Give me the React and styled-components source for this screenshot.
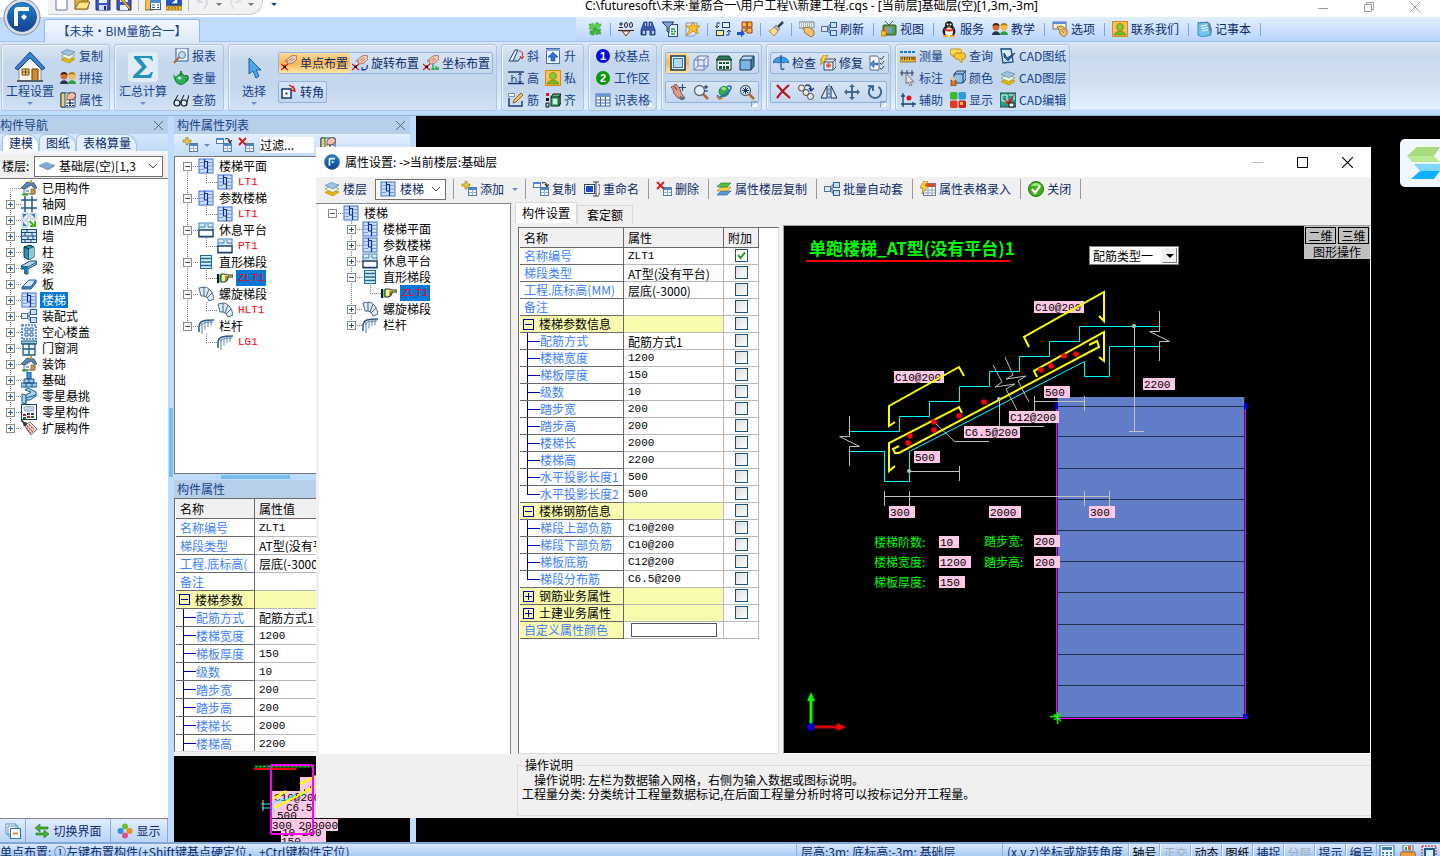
import { useState } from "react";
import styled, { createGlobalStyle } from "styled-components";

const GlobalStyle = createGlobalStyle`
  * {
    box-sizing: border-box;
  }

  body {
    margin: 0;
    overflow: hidden;
    background: #000;
    color: #000;
    font-family: "Noto Sans CJK SC", sans-serif;
    font-size: 12px;
    line-height: 16px;
  }

  button,
  input,
  select {
    margin: 0;
    padding: 0;
    border: 0;
    background: none;
    color: inherit;
    font: inherit;
  }

  svg {
    display: block;
    flex: none;
  }
`;

/* ---------- icons ---------- */

const navy = "#1b3f73";

const stairIcon = (
  <>
    <rect x="1" y="1" width="14" height="14" fill="#cfe0ff" stroke="#3a6fd8" />
    <path d="M1 4.500h5M1 8h5M1 11.500h5M10 4.500h5M10 8h5M10 11.500h5" stroke="#6f9af0" />
    <path d="M6.500 1v9h3v5M6.500 3.500h3v6.500" fill="none" stroke="#0d2f9c" strokeWidth="1.200" />
  </>
);

const layersIcon = (
  <>
    <path d="M1 11.500l6-3 8 2.500-6 4z" fill="#e6b800" stroke="#a98200" strokeWidth=".6" />
    <path d="M1 8l6-3 8 2.500-6 4z" fill="#f4f7e0" stroke="#6f8c4a" strokeWidth=".6" />
    <path d="M1 4.500l6-3 8 2.500-6 4z" fill="#9cc4de" stroke="#4c7b96" strokeWidth=".6" />
  </>
);

const peopleIcon = (
  <>
    <path d="M0 14c0-5 8-5 8 0z" fill="#26364f" />
    <circle cx="4" cy="6" r="3.500" fill="#d0702e" />
    <path d="M.5 5c0-4 7-4 7 0l-3.500-1z" fill="#4b1d0c" />
    <path d="M8 14c0-5 8-5 8 0z" fill="#2da042" />
    <circle cx="12" cy="6" r="3.500" fill="#f2bc4d" />
    <path d="M8.500 5c0-4 7-4 7 0l-3.500-1z" fill="#b07a12" />
  </>
);

const houseIcon = (
  <>
    <path d="M3 8v6h11V7L9 3z" fill="#f3f5ea" stroke="#4b6b7c" />
    <path d="M0 8l6-6 7 1 3 5-3 0-3-3-6 4z" fill="#5a86ad" stroke="#294d70" strokeWidth=".8" />
    <path d="M10 9h3v5h-3z" fill="#e39a2b" stroke="#82510b" strokeWidth=".6" />
    <path d="M5 10h3v2H5z" fill="#7bb3d8" />
    <path d="M1 14.500h6" stroke="#3c9a35" strokeWidth="2" />
    <path d="M9 0h2v3H9z" fill="#d8a01c" />
  </>
);

const linkIcon = (
  <>
    <path d="M6 8h3M8 4v8M8 4h2M8 12h2" stroke="#4d6a90" fill="none" />
    <rect x=".5" y="5.500" width="6" height="5" fill="#dfeaf8" stroke="#52719c" />
    <rect x="9.500" y="1.500" width="6" height="5" fill="#cfe0fa" stroke="#2c5fb8" />
    <rect x="9.500" y="9.500" width="6" height="5" fill="#cfe0fa" stroke="#2c5fb8" />
  </>
);

const sheet = (
  <>
    <rect x="7.500" y="6.500" width="8" height="8" fill="#f4f8fe" stroke="#5a7aa8" />
    <path d="M7 7h9v2H7z" fill="#4f86d0" />
    <path d="M8 11.500h7M11.500 9v5" stroke="#9ab3d4" />
  </>
);

const handCross = (
  <>
    <path d="M4 6l6-5 5-1 1 4-4 4-4 1-2-1 1-2z" fill="#f0c8b4" stroke="#8a5546" strokeWidth=".7" />
    <path d="M8 5l4-2M9 7l4-3" stroke="#b16e58" strokeWidth=".7" />
    <path d="M0 9l7 6M7 9l-7 6" stroke="#e01010" strokeWidth="1.200" />
    <rect x="2.500" y="10.500" width="2.500" height="2.500" fill="#200" />
  </>
);

const greenMan = (
  <>
    <rect x=".5" y=".5" width="15" height="15" fill="#ffc05a" stroke="#d98a14" />
    <circle cx="8" cy="6" r="3.500" fill="#8fc92e" stroke="#4d7d10" strokeWidth=".6" />
    <path d="M2 14c1-5 11-5 12 0z" fill="#7cba22" stroke="#4d7d10" strokeWidth=".6" />
  </>
);

const cubeIcon = (
  <>
    <path d="M1 5l3-4h11l-3 4z" fill="#b5dcf7" />
    <path d="M12 5l3-4v10l-3 4z" fill="#3c83b8" />
    <path d="M1 5h11v10H1z" fill="#79b6e4" />
    <path d="M1 5l3-4h11v10l-3 4H1zM1 5h11v10M12 5l3-4" fill="none" stroke="#18334f" />
  </>
);

const zoomGlass = (
  <>
    <path d="M10 10l5 5" stroke="#b5672a" strokeWidth="2.500" />
    <circle cx="6.500" cy="6.500" r="5" fill="#dff0fb" stroke="#5a6c7b" strokeWidth="1.300" />
  </>
);

const optionHand = (
  <>
    <rect x="1" y="1" width="13" height="7" fill="#fdf3c8" stroke="#4f73ac" />
    <path d="M1 1h13v2H1z" fill="#5b8fd5" />
    <path d="M5 6l5-1 5 4v4l-3 3-4-3-1-4z" fill="#f0c26d" stroke="#8b5a1c" strokeWidth=".8" />
    <path d="M8 8l4 4M10 7l3 3" stroke="#8b5a1c" strokeWidth=".6" />
  </>
);

const ICONS = {
  stair: stairIcon,
  layers: layersIcon,
  people: peopleIcon,
  house: houseIcon,
  link: linkIcon,
  greenMan,
  cube: cubeIcon,
  optionHand,
  newDoc: <path d="M3 0h7l4 4v11H3z" fill="#fff" stroke="#5e7494" />,
  open: (
    <>
      <path d="M1 14V3h5l1 2h7v9z" fill="#e7b53c" stroke="#8b6512" />
      <path d="M1 14l4-7h11l-3 7z" fill="#ffe28a" stroke="#8b6512" />
    </>
  ),
  save: (
    <>
      <path d="M1 1h14v14H1z" fill="#3f53c9" stroke="#182a80" />
      <path d="M4 1h8v7H4z" fill="#eef4ff" />
      <path d="M4 10h8v5H4z" fill="#cfd8e8" />
      <path d="M9 11h2v4H9z" fill="#182a80" />
    </>
  ),
  saveEdit: (
    <>
      <path d="M1 1h14v14H1z" fill="#3f53c9" stroke="#182a80" />
      <path d="M4 1h8v6H4zM4 10h8v5H4z" fill="#eef4ff" />
      <path d="M5 5l8 9 2 1-1-3-7-8z" fill="#f4c542" stroke="#5a3d08" strokeWidth=".8" />
    </>
  ),
  tableBook: (
    <>
      <path d="M0 0h8v15H0z" fill="#f1c25b" stroke="#986a12" />
      <rect x="5.500" y="4.500" width="10" height="10" fill="#fff" stroke="#2d5aa8" />
      <path d="M5 5h11v3H5z" fill="#4f86d0" />
      <path d="M7 10h3M12 10h2M7 12.500h3M12 12.500h2" stroke="#2d5aa8" />
    </>
  ),
  ruler: (
    <>
      <path d="M0 0h16v11H0z" fill="#2458c9" />
      <path d="M4 9l8-7v7z" fill="#dcebff" stroke="#0b2f82" />
      <path d="M0 11h16v4H0z" fill="#f3c13c" stroke="#8a6208" strokeWidth=".8" />
      <path d="M3 12v2M6 12v2M9 12v2M12 12v2" stroke="#6a4804" />
    </>
  ),
  undo: <path d="M3 7c3-5 10-4 9 2l-3 5M3 2v5h5" fill="none" stroke="#d9dde3" strokeWidth="2" />,
  redo: <path d="M13 7c-3-5-10-4-9 2l3 5M13 2v5H8" fill="none" stroke="#dfe2e7" strokeWidth="2" />,
  clover: (
    <g stroke="#2f9322" strokeWidth=".5">
      <path d="M8 8L2 8l1-2-1-3 3 0 1-1zM8 8l0-5 2-2 2 2 2 0-1 3z" fill="#5ccf45" />
      <path d="M8 8l6 0-1 2 1 3-3 0-2 1zM8 8l-1 6-2 0-2-1 0-3z" fill="#43b733" />
    </g>
  ),
  level: (
    <>
      <path d="M1 3h4M3 1v4M1 6.500h4" stroke="#222" />
      <ellipse cx="8" cy="4" rx="1.500" ry="2.500" fill="none" stroke="#222" />
      <ellipse cx="13" cy="4" rx="1.500" ry="2.500" fill="none" stroke="#222" />
      <path d="M0 9.500h16" stroke="#222" />
      <path d="M4 10h8l-4 5z" fill="#f5e6c8" stroke="#6b3a12" />
    </>
  ),
  binoculars: (
    <>
      <path d="M4 1h3v5h2V1h3l3 8v5h-5V9H6v5H1V9z" fill="#3a5bb0" stroke="#1c2e66" strokeWidth=".8" />
      <path d="M3 10h2v3H3zM12 10h2v3h-2zM5 2h1v3H5zM10 2h1v3h-1z" fill="#b7cbff" />
    </>
  ),
  filter: (
    <>
      <rect x="6.500" y="3.500" width="9" height="12" fill="#e9f5ea" stroke="#2a4c84" />
      <path d="M0 1h12L7 6v6l-2-2V6z" fill="#7fa5dc" stroke="#1e3f7c" />
      <path d="M9 8h4M9 10.500h2M12 10.500h2M9 13h4" stroke="#1d9b3a" strokeWidth="1.500" />
    </>
  ),
  star: (
    <>
      <path d="M2 2h11v9l-3 4H2z" fill="#dbe7f8" stroke="#8599bb" />
      <path d="M9 1l2 4 5 0-4 3 2 5-5-3-7 5 4-7-4-3h5z" fill="#ffc629" stroke="#c77f08" strokeWidth=".8" />
    </>
  ),
  swap: (
    <>
      <rect x="7.500" y="1.500" width="7" height="5" fill="#e3eefc" stroke={navy} />
      <rect x="1.500" y="9.500" width="7" height="5" fill="#ffe78c" stroke={navy} />
      <path d="M5 2H2v5M.5 5L2 7l2-2M11 14h3V9M12 11l2-2 2 2" fill="none" stroke={navy} />
    </>
  ),
  blocks: (
    <>
      <path d="M5 1h5v5H5zM10 1h5v5h-5zM10 7h5v5h-5z" fill="#ffb54a" stroke="#9c3c0c" />
      <path d="M5 7h4v3H5z" fill="#ffd690" stroke="#9c3c0c" />
      <path d="M0 11h4V9l4 3.500L4 16v-2H0z" fill="#1d58c9" />
    </>
  ),
  brush: (
    <>
      <path d="M15 1l-5 5" stroke="#39434f" strokeWidth="2.500" />
      <path d="M8 4l4 4-2 2-4-4z" fill="#a8b4c4" stroke="#5b6673" strokeWidth=".6" />
      <path d="M6 6l4 4-4 5-5-5c2 0 3-2 5-4z" fill="#f6dd8b" stroke="#a47b18" strokeWidth=".8" />
    </>
  ),
  handBoard: (
    <>
      <path d="M0 1h15v6H0z" fill="#eceff3" stroke="#6f7f92" />
      <path d="M2 3h11M2 5h11" stroke="#6f7f92" strokeDasharray="1 1" />
      <path d="M4 7l6-1 5 4v4l-3 2-6-4z" fill="#f0c26d" stroke="#8b5a1c" strokeWidth=".8" />
    </>
  ),
  tv: (
    <>
      <path d="M4 0l4 4 4-4" fill="none" stroke="#4a6a31" />
      <rect x="2" y="4" width="13" height="10" rx="1" fill="#5d9a3c" stroke="#2f5d17" />
      <path d="M4 6h7v6H4z" fill="#e8813a" />
      <path d="M7 6h4v6H7z" fill="#4ea8e0" />
      <path d="M0 10h5v5H0z" fill="#f6c12d" stroke="#a26c04" strokeWidth=".7" />
    </>
  ),
  penguin: (
    <>
      <path d="M3 15c-1-4-2-3-1-7 1-2 2-2 2-4 0-5 8-5 8 0 0 2 1 2 2 4 1 4 0 3-1 7z" fill="#1c1c1c" />
      <ellipse cx="8" cy="11" rx="4" ry="4.500" fill="#fff" />
      <path d="M3 7c3 2 7 2 10 0v2c-3 2-7 2-10 0z" fill="#e1251b" />
      <circle cx="6.500" cy="3.500" r="1" fill="#fff" />
      <circle cx="9.500" cy="3.500" r="1" fill="#fff" />
      <path d="M6 5.500h4l-2 1.300zM2 14h5v2H2zM9 14h5v2H9z" fill="#f8a51b" />
    </>
  ),
  notebook: (
    <>
      <path d="M2 2l10-1 3 13-9 2-4-2z" fill="#6ec5ee" stroke="#2b7cae" strokeWidth=".8" />
      <path d="M5 5l6-1M5 7.500l7-1M6 10l6-1" stroke="#fff" />
      <path d="M12 2l3 12 1-5-2-7z" fill="#6d7d8c" />
      <path d="M2 1.500h10" stroke="#49606f" strokeDasharray="1 1" />
    </>
  ),
  property: (
    <>
      <path d="M1 1h14v14H1z" fill="#fff" stroke="#1f4a7c" />
      <path d="M1 1h4v14H1z" fill="#f1d35d" stroke="#1f4a7c" />
      <path d="M6 8h8M6 11h8M6 13.500h8" stroke="#1f4a7c" strokeDasharray="2 1" />
      <path d="M7 3l5-3 4 3-2 4-5 1-2-1z" fill="#efc0ac" stroke="#6a3425" strokeWidth=".8" />
      <path d="M10 8v6M8 11h5" stroke="#123" />
    </>
  ),
  report: (
    <>
      <path d="M3 0h12v13H3z" fill="#eaf4ff" stroke="#2b5c94" />
      <path d="M7 8l-6 7" stroke="#b3672d" strokeWidth="2" />
      <circle cx="9" cy="7" r="3.500" fill="#b9def5" stroke="#5b7d95" />
    </>
  ),
  teapot: (
    <>
      <path d="M12 6c4-2 4 5 0 5" fill="none" stroke="#1b6b33" strokeWidth="1.500" />
      <path d="M3 7L0 4l1 5 3 4z" fill="#2b9c4e" />
      <ellipse cx="8" cy="9.500" rx="5.500" ry="5" fill="#2fae57" stroke="#176e31" strokeWidth=".8" />
      <path d="M5 5h6l-2-2V1H7v2z" fill="#1f8a42" />
      <ellipse cx="6.500" cy="8" rx="2" ry="1.500" fill="#bdf0c9" />
    </>
  ),
  glasses: (
    <>
      <circle cx="4" cy="11" r="3" fill="#dcefff" stroke="#111" strokeWidth="1.200" />
      <circle cx="11" cy="11" r="3" fill="#dcefff" stroke="#111" strokeWidth="1.200" />
      <path d="M1 10l4-7M14 10l2-7M7 10h1M8 9l3-6" fill="none" stroke="#111" />
    </>
  ),
  point: handCross,
  pointRotate: (
    <>
      {handCross}
      <path d="M10 14c4 2 6-1 5-4M10 12v3h3" fill="none" stroke="#1a35c8" strokeWidth="1.200" />
    </>
  ),
  pointCoord: (
    <>
      {handCross}
      <path d="M10 9v6M8 14h8M13 11v4M15 12v3" fill="none" stroke="#12a02e" strokeWidth="1.200" />
    </>
  ),
  corner: (
    <>
      <rect x="1" y="5" width="9" height="9" fill="#fff" stroke="#16375e" strokeWidth="1.500" />
      <rect x="4.500" y="8.500" width="2" height="2" fill="#16375e" />
      <path d="M8 1l2 1 4 3M12 2l2 5-4-1" fill="none" stroke="#e11" strokeWidth="1.300" />
    </>
  ),
  slope: (
    <>
      <path d="M1 13L7 2h3L5 13z" fill="#e3eefc" stroke={navy} />
      <path d="M5 13h5l3-4" fill="none" stroke={navy} />
      <path d="M11 3c4 0 4 3 3 7M12 8l2 3 2-3" fill="none" stroke="#d8261c" />
    </>
  ),
  up: (
    <>
      <rect x="1.500" y=".5" width="13" height="15" fill="#eef5ff" stroke="#4d6f9f" />
      <path d="M1 1h14v2H1z" fill="#7fa6de" />
      <path d="M8 4l5 5h-3v4H6V9H3z" fill="#2e72d9" stroke="#143f8e" strokeWidth=".6" />
    </>
  ),
  height: (
    <>
      <path d="M0 2h16M0 13.500h16" stroke={navy} strokeWidth="1.500" />
      <path d="M12 3v10M10 5l2-2 2 2M10 11l2 2 2-2M4 5v7M4 9c0-2 4-2 4 0v3" fill="none" stroke={navy} />
    </>
  ),
  rebar: (
    <>
      <path d="M1 6v8h13V9" fill="none" stroke={navy} strokeWidth="1.500" />
      <path d="M5 11l1-3 7-7 2 2-7 7z" fill="#f6c551" stroke="#7a4d0a" strokeWidth=".8" />
      <rect x=".5" y="1.500" width="6" height="3" fill="#fff" stroke="#8291a8" />
    </>
  ),
  align: (
    <>
      <path d="M1 1h3v3H1z" fill="#e11" />
      <path d="M1 6h3v3H1z" fill="#111" />
      <path d="M1 11h3v4H1z" fill="#9fd3f4" stroke="#111" />
      <path d="M6 5l2-3h8v9l-2 3H6z" fill="#4bc27b" stroke="#111" />
      <path d="M6 5h8v9M14 5l2-3" fill="none" stroke="#111" />
      <path d="M8 7h4v5H8z" fill="#c9f3d8" />
    </>
  ),
  table: (
    <>
      <rect x="1" y="2" width="14" height="12" fill="#fff" stroke="#3f6aa8" />
      <path d="M1 2h14v3H1z" fill="#6d97d6" />
      <path d="M1 8h14M1 11h14M5.500 5v9M10.500 5v9" stroke="#3f6aa8" />
    </>
  ),
  flatBox: (
    <>
      <rect x="1" y="1" width="14" height="14" fill="#e8f4fb" stroke="#12375c" strokeWidth="1.500" />
      <rect x="3.500" y="3.500" width="9" height="9" fill="#b5dbf3" stroke="#3977a6" />
    </>
  ),
  wireCube: (
    <path
      d="M1 5h10v10H1zM5 1h10v10H5zM1 5l4-4M11 5l4-4M11 15l4-4M1 15l4-4"
      fill="#e8f1fd"
      fillOpacity=".6"
      stroke="#6e7bb8"
    />
  ),
  building: (
    <>
      <path d="M0 5l3-4h10l3 4z" fill="#2d7a58" stroke="#113b2a" />
      <path d="M1 5h14v10H1z" fill="#e9f6ef" stroke="#113b2a" />
      <path d="M3 7h3v2H3zM7 7h2v2H7zM10 7h3v2h-3zM3 11h3v3H3zM7 11h2v4H7zM10 11h3v3h-3z" fill="#14523a" />
    </>
  ),
  pan: (
    <>
      <path d="M1 3l2-1 4 4-3-5 2-1 4 5 1 4 4 5-3 2-5-3-4-5 1-1z" fill="#dd9c8c" stroke="#713a30" strokeWidth=".8" />
      <path d="M10 12l5 2-2 2-4-1z" fill="#5d6e8a" />
      <path d="M12.500 0v7M9 3.500h7" stroke="#2c4e80" strokeWidth="1.200" />
    </>
  ),
  zoom: (
    <>
      {zoomGlass}
      <path d="M11 3h4M13 1v4M11 7h4" stroke="#15233a" />
    </>
  ),
  planet: (
    <>
      <circle cx="8" cy="7.500" r="5" fill="#35a94b" stroke="#166427" strokeWidth=".7" />
      <path d="M5 4c2-2 5-1 5 1s-4 2-5-1z" fill="#9fe87a" />
      <path d="M2 11c-4 7 14-3 13-8-1-2-4 0-4 0" fill="none" stroke="#2469c0" strokeWidth="1.500" />
      <path d="M2 12l1 3 4-1" fill="none" stroke="#d1821f" strokeWidth="1.500" />
    </>
  ),
  zoomFit: (
    <>
      {zoomGlass}
      <path d="M6.500 3v7M3 6.500h7M4 4l5 5M9 4l-5 5" stroke="#12386b" />
    </>
  ),
  umbrella: (
    <>
      <path d="M0 8c1-8 15-8 16 0l-3-1-2 1-3-1-3 1-2-1z" fill="#3c9ee8" stroke="#175a96" strokeWidth=".8" />
      <path d="M8 0v13c0 2 3 2 3 0" fill="none" stroke="#175a96" strokeWidth="1.300" />
    </>
  ),
  repair: (
    <>
      <path d="M4 7l3-3h9v8l-3 3H4z" fill="#dbe9f8" stroke="#324a66" />
      <path d="M4 7h9v8M13 7l3-3" fill="none" stroke="#324a66" />
      <path d="M4 0l4 0-3 4h2L0 10l2-5H0z" fill="#ffd23b" stroke="#a87404" strokeWidth=".7" />
      <path d="M8.500 8v5M6 10.500h5" stroke="#e3502a" strokeWidth="1.800" />
    </>
  ),
  checklist: (
    <>
      <path d="M1 1h7l2 2v12H1z" fill="#fff" stroke="#566d8c" />
      <path d="M9 8H5V5L1 9l4 4v-3h4z" fill="#4a8fd6" stroke="#1e4f8b" strokeWidth=".5" />
      <path d="M11 3l1.500 1.500L15 1M11 8l1.500 1.500L15 6M11 13l1.500 1.500L15 11" fill="none" stroke="#444" />
    </>
  ),
  cross: <path d="M2 1c4 5 8 9 13 13M14 1C9 5 5 10 2 14" fill="none" stroke="#b8141f" strokeWidth="2.200" />,
  circles: (
    <>
      <circle cx="3.500" cy="4" r="3" fill="#eee" stroke="#444" />
      <circle cx="8" cy="8.500" r="3" fill="#eee" stroke="#444" />
      <circle cx="12.500" cy="12.500" r="3" fill="#eee" stroke="#444" />
      <path d="M7 2c3-2 6-1 6 4M11 4l2 3 3-3" fill="none" stroke="#123e80" strokeWidth="1.300" />
    </>
  ),
  mirror: (
    <>
      <path d="M6 2v12H0zM10 2v12h6z" fill="#dfe9f6" stroke="#1a2a44" />
      <path d="M8 0v16" stroke="#1877d6" strokeDasharray="3 1" />
    </>
  ),
  move: (
    <path
      d="M8 0l3 3H9v4h4V5l3 3-3 3V9H9v4h2l-3 3-3-3h2V9H3v2L0 8l3-3v2h4V3H5z"
      fill="#42698f"
    />
  ),
  rotate: <path d="M5 2.500a6.200 6.200 0 1 0 6.500.3M1 2h5v5" fill="none" stroke="#42698f" strokeWidth="2" />,
  measure: (
    <>
      <path d="M0 4h16" stroke="#1479c9" strokeWidth="2" strokeDasharray="3 1" />
      <path d="M0 9h16v5H0z" fill="#e9b530" stroke="#6d4b05" strokeWidth=".6" />
      <path d="M2 9v3M4.500 9v3M7 9v3M9.500 9v3M12 9v3M14 9v3" stroke="#5a3d04" />
    </>
  ),
  mark: (
    <>
      <path d="M0 3h14M2 0v6M7 0v6M12 0v6" stroke="#2b3950" />
      <path d="M6 3l8 9h-4l2 3-2 1-2-4-2 2z" fill="#ddd" stroke="#777" />
    </>
  ),
  aux: (
    <>
      <path d="M3 1v14M1 12h15M1 4h4M13 10v5" stroke={navy} strokeWidth="1.300" />
      <circle cx="9" cy="6" r="2.500" fill="#e01010" />
    </>
  ),
  chat: (
    <>
      <path d="M1 1h9c2 0 2 6 0 6H5L3 9V7H1C0 7 0 1 1 1z" fill="#ffd84f" stroke="#ad7c08" strokeWidth=".8" />
      <path d="M6 5h8c2 0 2 6 0 6h-2v4l-4-4H6c-2 0-2-6 0-6z" fill="#ffc62b" stroke="#ad7c08" strokeWidth=".8" />
    </>
  ),
  colorCube: (
    <>
      <path d="M4 4l3-3h9v8l-3 4H4z" fill="#8fc4ec" stroke="#1f3c5c" />
      <path d="M4 4h9v9M13 4l3-3" fill="none" stroke="#1f3c5c" />
      <path d="M1 10h5v6H1z" fill="#c9773a" stroke="#6b3610" strokeWidth=".7" />
      <circle cx="3.500" cy="9" r="2" fill="#e8c39b" />
    </>
  ),
  tiles: (
    <>
      <rect x="0" y="0" width="7.500" height="7.500" rx="1.500" fill="#3dbb2d" />
      <rect x="8.500" y="0" width="7.500" height="7.500" rx="1.500" fill="#2b9be0" />
      <rect x="0" y="8.500" width="7.500" height="7.500" rx="1.500" fill="#e23b1e" />
      <rect x="8.500" y="8.500" width="7.500" height="7.500" rx="1.500" fill="#d92020" />
      <rect x="10" y="10" width="3" height="3" fill="#f7c32f" />
    </>
  ),
  cadPaper: (
    <>
      <path d="M1 1h10l2 13-10 1z" fill="#d8ecff" stroke="#154b86" strokeWidth="1.300" />
      <path d="M4 5l3 5 8-5-7 8-4-4z" fill="#2173c9" stroke="#113" strokeWidth=".7" />
    </>
  ),
  cadEdit: (
    <>
      <path d="M0 1h16v14H0z" fill="#2b9c87" stroke="#0f5244" />
      <path d="M2 3h5v6H2zM9 3h5v5" fill="none" stroke="#d8fff5" />
      <path d="M4 6l4 4 7-9-5 11H7z" fill="#e11" />
      <path d="M9 11h5v4H9z" fill="#fff" stroke="#111" />
    </>
  ),
  addSheet: (
    <>
      {sheet}
      <path d="M4 0h2v3h3v2H6v3H4V5H1V3h3z" fill="#f2d43e" stroke="#8c7108" strokeWidth=".6" />
    </>
  ),
  copySheet: (
    <>
      <rect x=".5" y="1.500" width="7" height="5" fill="#f4f8fe" stroke="#5a7aa8" />
      <path d="M0 1h8v2H0z" fill="#4f86d0" />
      {sheet}
      <path d="M9 2c3-1 5 0 5 3M12 3l2 3 2-3" fill="none" stroke="#111" />
    </>
  ),
  delSheet: (
    <>
      {sheet}
      <path d="M1 1l7 7M8 1L1 8" stroke="#d11a1a" strokeWidth="1.800" />
    </>
  ),
  rename: (
    <>
      <rect x=".5" y="3.500" width="10" height="9" fill="#fff" stroke="#2b4a7a" />
      <path d="M2 5h7v6H2z" fill="#1c49c9" />
      <path d="M9 1h6M9 15h6M12 1v14M14 4h2v9h-2" fill="none" stroke="#444" />
    </>
  ),
  greenLayers: (
    <>
      <path d="M1 14l4-4h10l-4 4z" fill="#4f9de0" stroke="#22598f" strokeWidth=".6" />
      <path d="M1 10l4-4h10l-4 4z" fill="#ffd257" stroke="#a77c0c" strokeWidth=".6" />
      <path d="M1 6l4-4h10l-4 4z" fill="#59bd4d" stroke="#257a1e" strokeWidth=".6" />
    </>
  ),
  sheetFlash: (
    <>
      <rect x="3.500" y="2.500" width="12" height="12" fill="#fff" stroke="#6b7c94" />
      <path d="M4 3h11v3H4z" fill="#d9482e" />
      <path d="M4 9h11M4 12h11M8 6v8M12 6v8" stroke="#8ba0bd" />
      <path d="M4 0h4L5 5h3l-6 8 1-6H0z" fill="#ffd23b" stroke="#a87404" strokeWidth=".7" />
    </>
  ),
  ok: (
    <>
      <circle cx="8" cy="8" r="7.500" fill="#3fae1c" stroke="#2a7b10" />
      <path d="M3 5c2-4 8-4 10 0z" fill="#a6e57f" />
      <path d="M4 8l3 4 5-7" fill="none" stroke="#fff" strokeWidth="2.200" />
    </>
  ),
  axisNet: <path d="M4 0v16M11 0v16M0 4h16M0 12h16" stroke="#1d5a8e" strokeWidth="1.500" />,
  bim: (
    <>
      <path d="M1 1h6v6H1zM9 1h6v6H9zM1 9h6v6H1z" fill="#eaf2fb" stroke="#a9c1de" />
      <path d="M2 2l4 0-4 4zM14 2v4l-4-4zM2 14v-4l4 4z" fill="#3e78b8" />
      <path d="M9 8l4 4V9h2v6H9v-2h2L8 10z" fill="#46b21f" />
    </>
  ),
  wall: (
    <>
      <rect x=".5" y="1.500" width="15" height="13" fill="#cfe3f3" stroke="#174a78" />
      <path d="M0 4.500h16M0 8h16M0 11.500h16M6 1v4M11 4v4M4 4v4M7 8v4M12 8v4M4 11v4M10 11v4" stroke="#174a78" />
    </>
  ),
  column: (
    <>
      <path d="M3 3l6-2 4 2v10l-5 3-5-3z" fill="#2f91a8" stroke="#0b2e44" />
      <path d="M3 3l5 2v11M8 5l5-2" fill="none" stroke="#0b2e44" />
      <path d="M8 5l5-2v10l-5 3z" fill="#7fd0dc" />
    </>
  ),
  beam: (
    <>
      <path d="M0 6l9-5h7v3l-9 5v5H4V9H0z" fill="#b4d4ea" stroke="#134a77" />
      <path d="M0 6h7v3H0zM3 9h3v5H3z" fill="#2272a8" />
      <path d="M7 7l9-5" stroke="#134a77" />
    </>
  ),
  slab: (
    <>
      <path d="M1 11l7-7h7l-5 7z" fill="#cce6f7" stroke="#1d5a8e" />
      <path d="M1 11v2h9l5-6V4l-5 7z" fill="#5b9cc9" stroke="#1d5a8e" />
    </>
  ),
  hollow: (
    <>
      <rect x="1" y="1" width="14" height="14" fill="#e2edfb" stroke="#3a74c4" strokeWidth="1.500" strokeDasharray="2 1" />
      <path d="M4 4h3v3H4zM9 4h3v3H9zM4 9h3v3H4zM9 9h3v3H9z" fill="#fff" stroke="#2a5cae" />
    </>
  ),
  windowDoor: (
    <>
      <path d="M0 1h16v3H0z" fill="#9fc7de" stroke="#1b5a84" />
      <path d="M2 4h12v11H2zM8 4v11M2 9h12" fill="#eaf4fb" stroke="#1b5a84" strokeWidth="1.300" />
    </>
  ),
  foundation: (
    <>
      <path d="M6 0h4v7H6z" fill="#3c96e3" stroke="#0f4f8d" />
      <path d="M3 7h10v4H3zM0 11h16v4H0z" fill="#9ccbea" stroke="#0f4f8d" />
      <path d="M8 7v4M5 11v4M11 11v4" stroke="#0f4f8d" />
    </>
  ),
  overhang: (
    <>
      <path d="M1 6l4 1 5-3-6-2 3-2 8 4v4l-6 4-4 0v4l-4-1z" fill="#a8d2ea" stroke="#195d88" />
      <path d="M5 7v8M5 10l10-3" fill="none" stroke="#195d88" />
    </>
  ),
  misc: (
    <>
      <rect x=".5" y=".5" width="15" height="15" fill="#fff" stroke="#1d3f66" />
      <path d="M4 7c-3-3 1-6 4-4 3-2 7 1 4 4z" fill="#c5d6e6" stroke="#6f8ca5" strokeWidth=".7" />
      <path d="M2 10h3v2H2zM6 12h3v2H6z" fill="#d11" />
      <path d="M6 9h3v2H6zM10 9h3v2h-3z" fill="#283c9a" />
      <path d="M2 13h3v2H2zM10 12h3v2h-3z" fill="#176b2c" />
    </>
  ),
  extend: (
    <>
      <path d="M3 5l6-3 7 7-6 6z" fill="#f6e6df" stroke="#6d6d6d" />
      <path d="M6 6l6 6M8 4.500l5 5M5 8l5 5" stroke="#c23030" strokeWidth="1.200" strokeDasharray="2 1" />
      <path d="M0 0l5 5" stroke="#222" strokeWidth="1.500" />
      <circle cx="4" cy="4" r="2" fill="#333" />
    </>
  ),
  platform: (
    <>
      <rect x="1" y="1" width="14" height="14" fill="#d7ebf9" stroke="#4583b9" />
      <path d="M1 5h6V2M10 2v3h5" fill="none" stroke="#4583b9" />
      <path d="M1 8h14v6.500H1z" fill="#fff" stroke="#1d4266" strokeWidth="1.300" />
    </>
  ),
  straight: (
    <>
      <rect x="2.500" y="1.500" width="11" height="13" fill="#d9f0f7" stroke="#1c6b9c" />
      <path d="M2 4.500h12M2 8h12M2 11.500h12" stroke="#1c6b9c" strokeWidth="1.300" />
    </>
  ),
  spiral: (
    <>
      <path d="M1 2l6-1c5 1 8 6 9 12l-5 2c-1-3-3-5-6-5l-2 0z" fill="#dfe9f2" stroke="#4a6984" />
      <path d="M6 1l0 9M11 3l-3 8M14 7l-5 5" stroke="#4a6984" />
    </>
  ),
  rail: (
    <>
      <path d="M1 14V9c0-6 4-7 15-7" fill="none" stroke="#2d5987" strokeWidth="1.500" />
      <path d="M4 5v11M7 3.500v8M10 3v6M13 2v6M3 8c1-3 4-4 12-4" fill="none" stroke="#5c84ab" />
    </>
  ),
  pointer: (
    <>
      <path d="M0 4h2v9H0z" fill="#111" />
      <path d="M2 4.500h2v8H2z" fill="#2cd0d8" />
      <path d="M4 4l4 0 2 1h6v2h-5v2h-1v2H8v1H4z" fill="#fff27a" stroke="#111" strokeWidth=".9" />
      <path d="M8 7h3M8 9h2" stroke="#111" strokeWidth=".8" />
    </>
  ),
  flatSlab: (
    <>
      <path d="M0 7l7-3 9 3-7 4z" fill="#7fa8d0" />
      <path d="M0 7l9 4 7-4v1l-7 4-9-4z" fill="#50789f" />
    </>
  ),
  windows: (
    <>
      <path d="M1 1h10v10H1zM3 3h10v10H3z" fill="#fff" stroke="#5b93b8" />
      <rect x="5.500" y="5.500" width="10" height="10" fill="#f2f9ff" stroke="#3a7299" />
      <path d="M8 10.500h5" stroke="#e28a1f" strokeWidth="1.800" />
    </>
  ),
  exchange: (
    <>
      <path d="M6 1L1 5l5 4V6h8V4H6z" fill="#43b32b" stroke="#1f7411" strokeWidth=".6" />
      <path d="M10 7l5 4-5 4v-3H2v-2h8z" fill="#43b32b" stroke="#1f7411" strokeWidth=".6" />
    </>
  ),
  flower: (
    <>
      <circle cx="8" cy="3.500" r="3" fill="#6cc02f" />
      <circle cx="12.500" cy="8" r="3" fill="#f08a24" />
      <circle cx="8" cy="12.500" r="3" fill="#e24b86" />
      <circle cx="3.500" cy="8" r="3" fill="#3a8ddb" />
    </>
  ),
  calc: (
    <>
      <rect x="1" y="0" width="14" height="16" fill="#e6f3fb" stroke="#2f6c8e" />
      <path d="M3 2h10v3H3z" fill="#3d82a5" />
      <path d="M3 8h10M3 11h10M3 14h10" stroke="#3d82a5" strokeWidth="2" strokeDasharray="2 2" />
    </>
  ),
  printer: (
    <>
      <path d="M3 0h10v6H3z" fill="#e9f0f7" stroke="#5b7691" />
      <path d="M5 2h2v3H5z" fill="#2f9d48" />
      <path d="M8 1h3v4H8z" fill="#e0622a" />
      <path d="M1 7h14l1 8H0z" fill="#ef9e42" stroke="#8b4e0c" strokeWidth=".7" />
    </>
  ),
  frame: (
    <>
      <rect x="1" y="1" width="14" height="14" fill="none" stroke="#d11" strokeDasharray="2 1" />
      <rect x="4" y="4" width="9" height="12" fill="#d8ecfb" stroke="#1d5b92" strokeWidth="2" />
    </>
  ),
};

const Icon = ({ name, size = 16 }) => (
  <svg width={size} height={size} viewBox="0 0 16 16" aria-hidden="true">
    {ICONS[name]}
  </svg>
);

const Logo = ({ size }) => (
  <svg width={size} height={size} viewBox="0 0 38 38" aria-hidden="true">
    <defs>
      <linearGradient id="ball" x1="0" y1="0" x2="0" y2="1">
        <stop offset="0" stopColor="#1d86cf" />
        <stop offset="1" stopColor="#123f8e" />
      </linearGradient>
    </defs>
    <circle cx="19" cy="19" r="18" fill={size > 20 ? "#d9dde4" : "#1a5aa8"} stroke="#858c98" />
    <circle cx="19" cy="19" r={size > 20 ? 14.5 : 17} fill="url(#ball)" stroke="#2a5b98" />
    <path d="M13 28V13q0-2 2-2h11" fill="none" stroke="#fff" strokeWidth="4" />
    <path d="M21 16l3 3-3 3-3-3z" fill="#fff" />
  </svg>
);

const BigHouse = () => (
  <svg width="32" height="32" viewBox="0 0 32 32" aria-hidden="true">
    <path d="M5 15v15h22V15L16 5z" fill="#fbf7ea" stroke="#8b8f94" />
    <path d="M1 17L16 1l15 16-3 2L16 7 4 19z" fill="#3b7fd0" stroke="#174a8c" />
    <path d="M18 18h6v12h-6z" fill="#d8892b" stroke="#6d3c0a" />
    <path d="M8 18h7v6H8z" fill="#f6c962" stroke="#6d4d18" />
    <path d="M11.500 18v6M8 21h7" stroke="#6d4d18" />
    <path d="M3 30h26" stroke="#55606a" strokeWidth="2" />
  </svg>
);

const BigSigma = () => (
  <svg width="32" height="32" viewBox="0 0 32 32" aria-hidden="true">
    <rect x="1" y="1" width="30" height="30" rx="4" fill="#e0edf7" />
    <path d="M25 5H7v2l8 9-9 9v2h18l2-6h-2c-1 2-2 3-4 3h-8l8-8-7-9h7c3 0 4 1 5 3h1z" fill="#2391bd" />
  </svg>
);

const BigArrow = () => (
  <svg width="32" height="32" viewBox="0 0 32 32" aria-hidden="true">
    <path d="M11 7v16l4-3 3 7 3-2-3-6h5z" fill="#4ea6ea" stroke="#215f9c" />
  </svg>
);

const Ball = ({ n, fill }) => (
  <svg width="16" height="16" viewBox="0 0 16 16" aria-hidden="true">
    <circle cx="8" cy="8" r="7" fill={fill} />
    <text x="8" y="12" fontSize="11" fontWeight="700" fontFamily="Liberation Sans, sans-serif" fill="#fff" textAnchor="middle">
      {n}
    </text>
  </svg>
);

const Chevron = () => (
  <svg width="10" height="6" viewBox="0 0 10 6" aria-hidden="true">
    <path d="M1 1l4 4 4-4" fill="none" stroke="#444" />
  </svg>
);

const Close = ({ size = 9, color = "#3c5a86" }) => (
  <svg width={size} height={size} viewBox="0 0 10 10" aria-hidden="true">
    <path d="M0 0l10 10M10 0L0 10" stroke={color} />
  </svg>
);

/* ---------- shell ---------- */

const Page = styled.div`
  position: relative;
  display: flex;
  flex-direction: column;
  height: 100vh;
  overflow: hidden;
`;

const TitleBar = styled.header`
  display: flex;
  flex: none;
  align-items: flex-start;
  height: 17px;
  overflow: hidden;
  background: #fff;
`;

const QuickBar = styled.div`
  display: flex;
  flex: none;
  align-items: flex-end;
  gap: 5px;
  width: 215px;
  height: 15px;
  margin-left: 48px;
  padding: 0 0 3px 5px;
  border-bottom: 1px solid #c8ccd2;
  border-right: 1px solid #c8ccd2;
  border-radius: 0 0 14px 0;
  background: #f2f2f3;
  overflow: hidden;
`;

const TitleText = styled.h1`
  flex: 1;
  margin: 0;
  padding-left: 28px;
  font-family: "Noto Sans", "Noto Sans CJK SC", sans-serif;
  font-size: 12px;
  font-weight: 400;
  line-height: 12px;
  text-align: center;
  white-space: nowrap;
`;

const WindowButtons = styled.div`
  display: flex;
  align-items: center;
  gap: ${(p) => p.$gap || 36}px;
  padding-right: ${(p) => p.$right || 20}px;
  height: ${(p) => p.$height || 13}px;
`;

const PlainButton = styled.button`
  display: flex;
  align-items: center;
  justify-content: center;
`;

const TabRow = styled.div`
  display: flex;
  flex: none;
  justify-content: space-between;
  height: 25px;
  background: #bfdbff;
  border-bottom: 1px solid #9fc3ec;
`;

const MainTab = styled.button`
  width: 156px;
  height: 23px;
  margin: 2px 0 0 44px;
  border: 1px solid #93baf0;
  border-bottom: 0;
  border-radius: 3px 3px 0 0;
  background: linear-gradient(#f3f8ff, #dce9f9);
  color: #15428b;
`;

const MenuBar = styled.nav`
  display: flex;
  align-items: center;
  gap: 6px;
  width: 60%;
  padding-left: 11px;
  background: linear-gradient(#e3efff, #cfe2ff 50%, #b7d4fb);
`;

const Divider = styled.span`
  flex: none;
  width: 1px;
  height: ${(p) => p.$height || 13}px;
  margin: 0 1px;
  background: ${(p) => p.$color || "#7da8de"};
`;

const MenuButton = styled.button`
  display: flex;
  flex: none;
  align-items: center;
  gap: 3px;
  padding-right: ${(p) => p.$end || 0}px;
  color: #0c2b6b;
  white-space: nowrap;
`;

const LogoSpot = styled.div`
  position: absolute;
  top: -2px;
  left: 3px;
`;

const Ribbon = styled.div`
  display: flex;
  flex: none;
  gap: 4px;
  height: 74px;
  padding: 2px 1px 4px;
  border-bottom: 1px solid #8fb4e3;
  background: linear-gradient(#dbe6f4, #c9d9ed 20%, #d3e1f2 60%, #e3f1ff 92%, #bfdbff 93%);
`;

const Group = styled.section`
  position: relative;
  display: flex;
  flex: none;
  align-items: center;
  width: ${(p) => p.$width}px;
  padding-left: ${(p) => p.$pad || 4}px;
  border: 1px solid #a9c4e4;
  border-radius: 3px;
  box-shadow: inset 1px 1px 0 #edf4fc;
  background: linear-gradient(#d9e5f3, #c6d8ed 25%, #c3d6ed 65%, #d2e2f5);
  color: #15428b;
`;

const Launcher = styled.button`
  position: absolute;
  right: 4px;
  bottom: 3px;
  width: 6px;
  height: 6px;
  border-top: 1px solid #7f9fc8;
  border-left: 1px solid #7f9fc8;
  background: linear-gradient(135deg, transparent 50%, #fff 50%);
`;

const BigButton = styled.button`
  display: flex;
  flex: none;
  flex-direction: column;
  align-items: center;
  width: 48px;
  white-space: nowrap;
`;

const Caret = styled.span`
  flex: none;
  width: 0;
  height: 0;
  margin: ${(p) => p.$margin || "0"};
  border: 3px solid transparent;
  border-top-color: ${(p) => p.$color || "#6b8fc0"};
  border-bottom: 0;
`;

const SmallGrid = styled.div`
  display: grid;
  grid-template-rows: repeat(3, 22px);
  grid-auto-flow: column;
  column-gap: ${(p) => p.$gap || 7}px;
  margin-left: ${(p) => p.$left || 0}px;
`;

const SmallButton = styled.button`
  display: flex;
  align-items: center;
  gap: 3px;
  white-space: nowrap;
`;

const Strips = styled.div`
  display: flex;
  flex-direction: column;
  align-items: flex-start;
  gap: 7px;
`;

const Strip = styled.div`
  display: flex;
  border: 1px solid #94b3da;
  border-radius: 2px;
  background: linear-gradient(#d7e4f4, #c4d7ee);
`;

const StripButton = styled.button`
  display: flex;
  align-items: center;
  justify-content: center;
  gap: 3px;
  height: 20px;
  padding: 0 2px;
  min-width: 23px;
  background: ${(p) => (p.$on ? "linear-gradient(#fbdb9c, #fdb755 50%, #ffe6a0)" : "none")};
  color: #0c2b6b;
  white-space: nowrap;
`;

const Work = styled.main`
  position: relative;
  display: flex;
  flex: 1;
  min-height: 0;
  background: #000;
`;

/* ---------- docked panels ---------- */

const Dock = styled.aside`
  display: flex;
  flex: none;
  flex-direction: column;
  width: ${(p) => p.$width}px;
  background: #fff;
  overflow: hidden;
`;

const Sash = styled.div`
  flex: none;
  width: 6px;
  background: ${(p) =>
    p.$mark ? "linear-gradient(#79bdf0, #79bdf0) 1px 292px / 4px 69px no-repeat, #bfdbff" : "#bfdbff"};
`;

const DockTitle = styled.div`
  display: flex;
  flex: none;
  align-items: center;
  justify-content: space-between;
  height: 18px;
  padding: 0 5px 0 ${(p) => p.$pad || 0}px;
  background: #b8cfe9;
  color: #15428b;
`;

const DockTabs = styled.div`
  display: flex;
  flex: none;
  height: 17px;
  padding-left: 2px;
  background: linear-gradient(#d3e5fb, #c0dafb);
`;

const DockTab = styled.button`
  padding: 0 5px 0 6px;
  border: 1px solid #a5c3ea;
  border-bottom: 0;
  border-radius: 6px 12px 0 0;
  background: ${(p) => (p.$on ? "#fff" : "#e3effd")};
  color: #0c2b6b;
`;

const FloorRow = styled.label`
  display: flex;
  flex: none;
  align-items: center;
  justify-content: space-between;
  height: 28px;
  padding: 0 5px 0 2px;
  border-top: 3px solid #f3f7fd;
  border-bottom: 1px solid #777;
  background: #f0f0f0;
`;

const Combo = styled.span`
  display: flex;
  flex: none;
  align-items: center;
  gap: 4px;
  width: ${(p) => p.$width}px;
  height: 21px;
  padding: 0 4px;
  border: 1px solid #6f6f6f;
  background: #fff;
`;

const Select = styled.select`
  flex: 1;
  min-width: 0;
  appearance: none;
  outline: 0;
  white-space: nowrap;
`;

const Tree = styled.ul`
  flex: ${(p) => p.$flex || "1"};
  min-height: 0;
  margin: 0;
  padding: ${(p) => p.$pad || "1px 0 0 6px"};
  border: solid #777;
  border-width: ${(p) => (p.$boxed ? "1px 0 1px 1px" : "0")};
  overflow: hidden;
  list-style: none;
  background: #fff;
`;

const TreeRow = styled.li`
  display: flex;
  align-items: center;
  height: 16px;
  white-space: nowrap;
`;

const dots = "linear-gradient(#808080 50%, transparent 0)";
const dotsX = "linear-gradient(90deg, #808080 50%, transparent 0)";

const clips = {
  first: "polygon(4px 8px, 100% 8px, 100% 9px, 5px 9px, 5px 16px, 4px 16px)",
  top: "polygon(0 3px, 100% 3px, 100% 100%, 0 100%)",
  root: "polygon(0 3px, 100% 3px, 100% 13px, 0 13px)",
  last: "polygon(0 0, 100% 0, 100% 13px, 0 13px)",
  leaf: "polygon(4px 0, 100% 0, 100% 9px, 4px 9px)",
};

const Guide = styled.span`
  flex: none;
  width: 19px;
  height: 16px;
  background: ${(p) => (p.$line ? `${dots} 4px 0 / 1px 2px repeat-y` : "none")};
`;

const Branch = styled.span`
  display: flex;
  flex: none;
  align-items: center;
  width: 15px;
  height: 16px;
  background-image: ${dots}, ${dotsX};
  background-size: 1px 2px, 2px 1px;
  background-repeat: repeat-y, repeat-x;
  background-position: 4px 0, 4px 8px;
  clip-path: ${(p) => clips[p.$end] || "none"};
`;

const Toggle = styled.button`
  width: 9px;
  height: 9px;
  border: 1px solid #8c8c8c;
  background:
    linear-gradient(#2d4f9c, #2d4f9c) 1px 3px / 5px 1px no-repeat,
    linear-gradient(#2d4f9c, #2d4f9c) 3px 1px / 1px ${(p) => (p.$open ? 0 : 5)}px no-repeat,
    #fff;
`;

const TreeText = styled.span`
  margin-left: 3px;
  padding: 0 2px;
  height: 16px;
  line-height: 16px;
  font-family: ${(p) => (p.$code ? `"Liberation Mono", monospace` : "inherit")};
  font-size: ${(p) => (p.$code ? 11 : 12)}px;
  color: ${(p) => (p.$code ? "#f00" : p.$on ? "#fff" : "#000")};
  background: ${(p) => (p.$on ? "#0078d7" : "none")};
`;

const DockFooter = styled.div`
  display: flex;
  flex: none;
  height: 24px;
  border-top: 1px solid #888;
  background: linear-gradient(#e0ecfd, #b9d4f9);
`;

const FooterButton = styled.button`
  display: flex;
  flex: ${(p) => (p.$small ? "0 0 26px" : p.$grow || 1)};
  align-items: center;
  justify-content: center;
  gap: 3px;
  border-right: 1px solid #8aa9d4;
  color: #0c2b6b;
  white-space: nowrap;
`;

const PanelBar = styled.div`
  display: flex;
  flex: none;
  align-items: center;
  gap: 6px;
  height: 22px;
  padding-left: 8px;
  background: linear-gradient(#e3efff, #c5dcfb);
`;

const FilterInput = styled.input`
  width: 54px;
  height: 16px;
  background: #fff;
`;

const Splitter = styled.div`
  flex: none;
  height: 6px;
  background: linear-gradient(90deg, #79bdf0, #79bdf0) 47px 1px / 69px 4px no-repeat, #bfdbff;
`;

/* ---------- property grids ---------- */

const GridBox = styled.div`
  flex: ${(p) => p.$flex || "1"};
  min-height: 0;
  border: 1px solid #6d6d6d;
  border-right-color: #ddd;
  border-bottom-color: #ddd;
  background: #fff;
  overflow: hidden;
`;

const Grid = styled.table`
  width: ${(p) => p.$width}px;
  margin-left: 1px;
  border-collapse: separate;
  border-spacing: 0;
  table-layout: fixed;
`;

const HeadCell = styled.th`
  height: 20px;
  padding: 0 0 0 4px;
  border-right: 1px solid #696969;
  border-bottom: 1px solid #696969;
  background: #f0f0f0;
  font-weight: 400;
  line-height: 16px;
  text-align: left;
`;

const NameCell = styled.th`
  height: ${(p) => p.$height}px;
  padding: 0 0 0 ${(p) => (p.$kind === "row" || p.$kind === "color" ? 4 : 2)}px;
  border-right: 1px solid #696969;
  border-bottom: 1px solid #696969;
  background: ${(p) => (p.$kind === "head" || p.$kind === "color" ? "#f8fbae" : "#fff")};
  color: ${(p) => (p.$kind === "head" ? "#000" : "#4080ff")};
  font-weight: 400;
  line-height: ${(p) => p.$height - 1}px;
  text-align: left;
  white-space: nowrap;
  overflow: hidden;
`;

const NameInner = styled.div`
  display: flex;
  align-items: center;
  gap: ${(p) => p.$gap || 0}px;
  height: ${(p) => p.$height - 1}px;
`;

const ValueCell = styled.td`
  padding: ${(p) => (p.$code ? 1 : 0)}px 0 0 4px;
  border-right: 1px solid #b9b9b9;
  border-bottom: 1px solid #b9b9b9;
  background: ${(p) => (p.$fill ? "#f8fbae" : "#fff")};
  font-family: ${(p) => (p.$code ? `"Liberation Mono", monospace` : "inherit")};
  font-size: ${(p) => (p.$code ? 11 : 12)}px;
  line-height: 15px;
  white-space: nowrap;
  overflow: hidden;
`;

const CheckCell = styled.td`
  padding: 0;
  border-right: 1px solid #b9b9b9;
  border-bottom: 1px solid #b9b9b9;
`;

const Check = styled.input`
  display: block;
  appearance: none;
  width: 13px;
  height: 13px;
  margin: 0 auto 1px;
  border: 1px solid #1c5180;
  background: linear-gradient(135deg, #dcdcd7, #fff) padding-box;

  &:checked {
    background: url("data:image/svg+xml,%3Csvg xmlns='http://www.w3.org/2000/svg' viewBox='0 0 11 11'%3E%3Cpath d='M2 5l2.500 3L9 2.500' fill='none' stroke='%2321a121' stroke-width='2'/%3E%3C/svg%3E")
      #fff;
  }
`;

const GroupToggle = styled.button`
  flex: none;
  width: 11px;
  height: 11px;
  margin-left: 1px;
  border: 1px solid #0000a0;
  background:
    linear-gradient(#0000a0, #0000a0) 1px 4px / 7px 1px no-repeat,
    linear-gradient(#0000a0, #0000a0) 4px 1px / 1px ${(p) => (p.$open ? 0 : 7)}px no-repeat;
`;

const Stem = styled.span`
  flex: none;
  width: 13px;
  height: 100%;
  margin-left: 5px;
  background:
    linear-gradient(#0000c0, #0000c0) 0 0 / 1px ${(p) => (p.$last ? "50%" : "100%")} no-repeat,
    linear-gradient(#0000c0, #0000c0) 0 50% / 13px 1px no-repeat;
`;

const ColorInput = styled.input`
  display: block;
  width: 86px;
  height: 14px;
  margin-left: 3px;
  border: 1px solid #555;
  background: #fff;
`;

const MiniDrawingBox = styled.div`
  flex: 1;
  min-height: 0;
  border-top: 4px solid #f0f0f0;
  background: #000;
  overflow: hidden;
`;

/* ---------- dialog ---------- */

const Dialog = styled.section`
  position: absolute;
  top: 31px;
  right: 69px;
  bottom: 24px;
  left: 316px;
  display: flex;
  flex-direction: column;
  background: #f0f0f0;
`;

const DialogTitle = styled.header`
  display: flex;
  flex: none;
  align-items: center;
  gap: 5px;
  height: 30px;
  padding-left: 8px;
  background: #fff;
`;

const DialogName = styled.h2`
  flex: 1;
  margin: 0;
  font-size: 12px;
  font-weight: 400;
`;

const DialogBar = styled.div`
  display: flex;
  flex: none;
  align-items: center;
  gap: 6px;
  height: 24px;
  margin-bottom: 2px;
  padding-left: 8px;
  color: #0c2b6b;
`;

const DialogBody = styled.div`
  display: flex;
  flex: 1;
  min-height: 0;
`;

const TreeBox = styled.div`
  display: flex;
  flex: none;
  width: 195px;
  padding-left: 3px;
  border-top: 1px solid #828790;
  border-right: 1px solid #828790;
`;

const Settings = styled.div`
  display: flex;
  flex: none;
  flex-direction: column;
  width: 269px;
  padding: 0 1px 0 7px;
`;

const PageTabs = styled.div`
  display: flex;
  flex: none;
  align-items: flex-end;
  height: 24px;
  margin-left: -3px;
`;

const PageTab = styled.button`
  height: ${(p) => (p.$on ? 21 : 19)}px;
  margin-bottom: ${(p) => (p.$on ? 4 : 3)}px;
  padding: 0 ${(p) => (p.$on ? 6 : 9)}px;
  border: 1px solid #d9d9d9;
  border-bottom: 0;
  background: ${(p) => (p.$on ? "#fff" : "#f0f0f0")};
`;

const CadBox = styled.div`
  position: relative;
  flex: 1;
  min-width: 0;
  margin: 22px 0 0 3px;
  border-top: 1px solid #a0a0a0;
  border-left: 1px solid #a0a0a0;
  border-right: 1px solid #fff;
  border-bottom: 1px solid #fff;
  background: #000;
  overflow: hidden;
`;

const TypePicker = styled.div`
  position: absolute;
  top: 20px;
  left: 305px;
  display: flex;
  align-items: center;
  width: 90px;
  height: 19px;
  padding: 1px 1px 1px 3px;
  border: 1px solid #808080;
  background: #fff;
`;

const DropMark = styled.span`
  display: flex;
  align-items: center;
  justify-content: center;
  width: 15px;
  height: 15px;
  border: 1px solid #777;
  border-top-color: #eee;
  border-left-color: #eee;
  background: #f0f0f0;

  &::after {
    content: "";
    border: 4px solid transparent;
    border-top: 4px solid #000;
    border-bottom: 0;
  }
`;

const ViewBox = styled.div`
  position: absolute;
  top: 0;
  right: 0;
  display: grid;
  grid-template-columns: 1fr 1fr;
  gap: 1px 2px;
  width: 66px;
  padding: 1px;
  background: #c0c0c0;
  text-align: center;
`;

const ViewButton = styled.button`
  height: 17px;
  border: 1px solid #000;
  line-height: 15px;
`;

const ViewLabel = styled.span`
  grid-column: 1 / 3;
  height: 13px;
  line-height: 13px;
`;

const Notes = styled.fieldset`
  flex: none;
  height: 59px;
  margin: 3px 0 2px 201px;
  padding: 0 4px;
  border: 1px solid #dcdcdc;
  border-right: 0;
  line-height: 14px;
`;

const NotesTitle = styled.legend`
  padding: 0 3px;
  line-height: 16px;
`;

const Note = styled.p`
  margin: 0;
  padding-left: ${(p) => p.$indent || 0}px;
`;

const FloatLogo = styled.a`
  position: absolute;
  top: 23px;
  right: 0;
  width: 40px;
  height: 48px;
  border-radius: 5px 0 0 5px;
  background: #f1f8fd;
  overflow: hidden;
`;

/* ---------- status bar ---------- */

const Status = styled.footer`
  display: flex;
  flex: none;
  height: 14px;
  border-top: 2px solid #7ea6d8;
  background: linear-gradient(#d9e8fc, #a9caf5);
  color: #0c2b6b;
  overflow: hidden;
`;

const StatusCell = styled.span`
  flex: ${(p) => (p.$width ? `0 0 ${p.$width}px` : "1")};
  padding-left: ${(p) => p.$pad || 0}px;
  border-right: 1px solid #8fb2e0;
  line-height: 16px;
  white-space: nowrap;
  overflow: hidden;
`;

const StatusButton = styled.button`
  flex: 0 0 31px;
  height: 17px;
  border-left: 1px solid #eef5ff;
  border-right: 1px solid #8fb2e0;
  color: ${(p) => p.$color || "#0c2b6b"};
  line-height: 16px;
  white-space: nowrap;
`;

const StatusIcon = styled.button`
  flex: 0 0 21px;
  height: 17px;
  padding-left: 2px;
`;

/* ---------- data ---------- */

const menu = [
  { icon: "clover" },
  null,
  { icon: "level" },
  { icon: "binoculars" },
  { icon: "filter" },
  { icon: "star" },
  null,
  { icon: "swap" },
  { icon: "blocks" },
  null,
  { icon: "brush" },
  null,
  { icon: "handBoard" },
  { icon: "link", text: "刷新" },
  null,
  { icon: "tv", text: "视图" },
  null,
  { icon: "penguin", text: "服务" },
  { icon: "people", text: "教学" },
  null,
  { icon: "optionHand", text: "选项" },
  null,
  { icon: "greenMan", text: "联系我们" },
  null,
  { icon: "notebook", text: "记事本" },
  null,
];

const navTree = [
  ["house", "已用构件"],
  ["axisNet", "轴网"],
  ["bim", "BIM应用"],
  ["wall", "墙"],
  ["column", "柱"],
  ["beam", "梁"],
  ["slab", "板"],
  ["stair", "楼梯"],
  ["link", "装配式"],
  ["hollow", "空心楼盖"],
  ["windowDoor", "门窗洞"],
  ["house", "装饰"],
  ["foundation", "基础"],
  ["overhang", "零星悬挑"],
  ["misc", "零星构件"],
  ["extend", "扩展构件"],
];

const partTree = [
  ["stair", "楼梯平面", "LT1"],
  ["stair", "参数楼梯", "LT1"],
  ["platform", "休息平台", "PT1"],
  ["straight", "直形梯段", "ZLT1"],
  ["spiral", "螺旋梯段", "HLT1"],
  ["rail", "栏杆", "LG1"],
];

const rows = [
  { name: "名称编号", value: "ZLT1", kind: "row", checked: true },
  { name: "梯段类型", value: "AT型(没有平台)", kind: "row" },
  { name: "工程.底标高(MM)", value: "层底(-3000)", kind: "row" },
  { name: "备注", value: "", kind: "row" },
  { name: "楼梯参数信息", kind: "head", open: true },
  { name: "配筋方式", value: "配筋方式1", kind: "sub" },
  { name: "楼梯宽度", value: "1200", kind: "sub" },
  { name: "梯板厚度", value: "150", kind: "sub" },
  { name: "级数", value: "10", kind: "sub" },
  { name: "踏步宽", value: "200", kind: "sub" },
  { name: "踏步高", value: "200", kind: "sub" },
  { name: "楼梯长", value: "2000", kind: "sub" },
  { name: "楼梯高", value: "2200", kind: "sub" },
  { name: "水平投影长度1", value: "500", kind: "sub" },
  { name: "水平投影长度2", value: "500", kind: "sub", last: true },
  { name: "楼梯钢筋信息", kind: "head", open: true },
  { name: "梯段上部负筋", value: "C10@200", kind: "sub" },
  { name: "梯段下部负筋", value: "C10@200", kind: "sub" },
  { name: "梯板底筋", value: "C12@200", kind: "sub" },
  { name: "梯段分布筋", value: "C6.5@200", kind: "sub", last: true },
  { name: "钢筋业务属性", kind: "head" },
  { name: "土建业务属性", kind: "head" },
  { name: "自定义属性颜色", kind: "color" },
];

const dockRows = rows
  .slice(0, 13)
  .map((row) => (row.kind === "head" ? { ...row, name: "楼梯参数" } : row))
  .map((row, i) => (i === 2 ? { ...row, name: "工程.底标高(" } : row));

// x, y, width, text
const tags = [
  [1034, 301, 50, "C10@200"],
  [894, 371, 50, "C10@200"],
  [1143, 378, 32, "2200"],
  [1044, 386, 26, "500"],
  [1009, 411, 50, "C12@200"],
  [964, 426, 56, "C6.5@200"],
  [914, 451, 26, "500"],
  [889, 506, 26, "300"],
  [989, 506, 32, "2000"],
  [1089, 506, 26, "300"],
  [939, 536, 20, "10"],
  [939, 556, 32, "1200"],
  [939, 576, 26, "150"],
  [1034, 535, 26, "200"],
  [1034, 556, 26, "200"],
];

const captions = [
  [874, 547, "楼梯阶数:"],
  [874, 567, "楼梯宽度:"],
  [874, 587, "梯板厚度:"],
  [984, 546, "踏步宽:"],
  [984, 567, "踏步高:"],
];

const rebarDots = [
  [1041, 370], [1051, 366], [1064, 356], [1076, 354], [984, 402],
  [959, 416], [934, 422], [934, 430], [910, 436], [908, 443],
];

const slabLines = [406, 436, 468, 499, 530, 561, 592, 624, 654, 685];

const isCode = (text) => /^[\x20-\x7e]+$/.test(text || "");

/* ---------- pieces ---------- */

const Small = ({ icon, children }) => (
  <SmallButton>
    {typeof icon === "string" ? <Icon name={icon} /> : icon}
    {children}
  </SmallButton>
);

const PropertyGrid = ({ data, height, widths, heads, checks }) => (
  <Grid $width={widths.reduce((a, b) => a + b, 0)}>
    <colgroup>
      {widths.map((w, i) => (
        <col key={i} width={w} />
      ))}
    </colgroup>
    <thead>
      <tr>
        {heads.map((h) => (
          <HeadCell key={h} scope="col">{h}</HeadCell>
        ))}
      </tr>
    </thead>
    <tbody>
      {data.map((row) => (
        <tr key={row.name}>
          <NameCell scope="row" $kind={row.kind} $height={height}>
            <NameInner $height={height} $gap={row.kind === "head" ? 5 : 0}>
              {row.kind === "head" && <GroupToggle $open={row.open} aria-label={row.name} />}
              {row.kind === "sub" && <Stem $last={row.last} />}
              {row.name}
            </NameInner>
          </NameCell>
          <ValueCell $fill={row.kind === "head"} $code={isCode(row.value)}>
            {row.kind === "color" ? <ColorInput aria-label={row.name} /> : row.value}
          </ValueCell>
          {checks && (
            <CheckCell>
              {row.kind !== "color" && (
                <Check type="checkbox" defaultChecked={row.checked} aria-label={row.name} />
              )}
            </CheckCell>
          )}
        </tr>
      ))}
    </tbody>
  </Grid>
);

const StairDrawing = () => (
  <svg width="586" height="528" viewBox="784 226 586 528" role="img" aria-label="楼梯">
    <rect x="1058" y="397" width="187" height="321" fill="#627dc8" />
    <g stroke="#22304f">
      {slabLines.map((y) => (
        <path key={y} d={`M1058 ${y + 0.5}H1245`} />
      ))}
      <path d="M1057.500 397v321M1244.500 397v321M1058 717.500h187" />
    </g>
    <path d="M1056.500 409v309M1245.500 409v309M1057 718.500h189" stroke="#f0f" />
    <path d="M1055 403h3v6h-3zM1244 403h3v6h-3zM1243 714h4v5h-4z" fill="#00f" />
    {tags.map(([x, y, w, text], i) => (
      <g key={i}>
        <rect x={x} y={y} width={w} height="12" fill="#ffc8e6" />
        <text x={x + 1} y={y + 10} fontFamily="Liberation Mono, monospace" fontSize="11">
          {text}
        </text>
      </g>
    ))}
    {captions.map(([x, y, text]) => (
      <text key={text} x={x} y={y} fill="#0f0" fontSize="12">
        {text}
      </text>
    ))}
    <text x="809" y="255" fill="#0f0" fontSize="17" fontWeight="700">
      单跑楼梯_AT型(没有平台)1
    </text>
    <path d="M806 261h204" stroke="#f00" strokeWidth="2" />
    <g fill="none" stroke="#0ff">
      <path d="M849.500 431.500h50v-15h30v-15h30v-15h30v-15h30v-15h30v-15h30v-15h80" />
      <path d="M849.500 451.500h35v30h25v-30l175-90v15h25v-30h50" />
    </g>
    <g fill="none" stroke="#c0c0c0">
      <path d="M849.500 416v20.500h-10l20 10h-10V466M1159.500 311v20.500h-10l20 10h-10V361" />
      <path d="M993 365l9 17-7 5 20-3-9 5 11 21M1005 357l8 18-7 4 20-3-8 5 11 21" />
      <path d="M999.500 399v27.500H1044M934 422l20.500 19.500H989" />
      <path d="M1034.500 401.500h50M1034.500 396v15M1084.500 396v15" />
      <path d="M909 471.500h50M959.500 466v15" />
      <path d="M1134.500 326v105.500M1129 431.500h15" />
      <path d="M884.500 496.500h225M884.500 491v15M909.500 491v15M1084.500 491v15M1109.500 491v15" />
    </g>
    <g fill="none" stroke="#ff0" strokeWidth="2">
      <path d="M1029 347l-5-10 80-45v29l-5-5" />
      <path d="M895 422l-6 4v-20l70-39 5 9" />
      <path d="M895 466l-6 5v-28l70-36 3 6" />
      <path d="M1037 377l-3-6 70-39v29l-5-4" />
      <path d="M899 446l-6 3 2 4 4 0 200-106-2-6-8 4" />
    </g>
    <g fill="#f00">
      {rebarDots.map(([x, y]) => (
        <circle key={`${x}-${y}`} cx={x} cy={y} r="2.800" />
      ))}
    </g>
    <g fill="#c0c0c0">
      <circle cx="999" cy="399" r="2" />
      <circle cx="909" cy="471" r="2" />
      <circle cx="1134" cy="326" r="2" />
    </g>
    <path d="M811 725v-27" stroke="#0f0" strokeWidth="3" />
    <path d="M811 692l4 9h-8z" fill="#0f0" />
    <path d="M813 727h24" stroke="#d00" strokeWidth="3" />
    <path d="M846 727l-9 4v-8z" fill="#f00" />
    <circle cx="811" cy="727" r="4" fill="#0000c8" />
    <path d="M1050 716.500h8M1057.500 712v12M1054 720l7-6M1054 714l7 7" stroke="#0f0" strokeWidth="1.500" />
  </svg>
);

const MiniDrawing = () => (
  <svg width="236" height="86" viewBox="174 756 236 86" aria-hidden="true">
    <path d="M255 766.500h60" stroke="#0c0" strokeWidth="2" strokeDasharray="3 1" />
    <path d="M254 769h42" stroke="#f00" strokeWidth="2" />
    <path d="M300 777h16v14h-16zM272 791h44v27h-44zM272 819h66v12h-66zM281 831h45v11h-45z" fill="#ffc8e6" />
    <g fontFamily="Liberation Mono, monospace" fontSize="11">
      <text x="274" y="801">C10@200</text>
      <text x="286" y="811">C6.5</text>
      <text x="277" y="819">500</text>
      <text x="272" y="829">300 200000</text>
      <text x="282" y="836">10 200</text>
      <text x="281" y="845">150</text>
    </g>
    <path d="M261 804h11l6-4h8l8-5h8l8-6 8-8M262 808h12v6" fill="none" stroke="#0ff" />
    <path d="M263 800v11" stroke="#ccc" />
    <path d="M273 799l13-8M274 808l42-22M300 784l16-8" stroke="#ff0" strokeWidth="2.500" />
    <path d="M296 795h1M304 790h1M310 787h1" stroke="#f00" strokeWidth="2" />
    <rect x="271" y="765" width="42" height="69" rx="1" fill="none" stroke="#f0f" strokeWidth="2" />
  </svg>
);

const Tool = ({ icon, children }) => (
  <MenuButton $end={2}>
    <Icon name={icon} />
    {children}
  </MenuButton>
);

const App = () => {
  const [selected, setSelected] = useState("楼梯");

  return (
    <>
      <GlobalStyle />
      <Page>
        <TitleBar>
          <QuickBar>
            <Icon name="newDoc" />
            <Icon name="open" />
            <Icon name="save" />
            <Icon name="saveEdit" />
            <Divider $color="#bbb" />
            <Icon name="tableBook" />
            <Icon name="ruler" />
            <Divider $color="#bbb" />
            <Icon name="undo" />
            <Caret $margin="0 0 5px" $color="#777" />
            <Icon name="redo" />
            <Caret $margin="0 0 5px" $color="#777" />
          </QuickBar>
          <Caret $margin="3px 0 0 8px" $color="#15428b" />
          <TitleText>
            C:\futuresoft\未来·量筋合一\用户工程\\新建工程.cqs - [当前层]基础层(空)[1,3m,-3m]
          </TitleText>
          <WindowButtons>
            <PlainButton aria-label="最小化">
              <svg width="10" height="10"><path d="M0 6.500h10" stroke="#999" /></svg>
            </PlainButton>
            <PlainButton aria-label="还原">
              <svg width="10" height="10">
                <path d="M.5 2.500h7v7h-7zM2.500 2V.5h7v7H8" fill="none" stroke="#999" />
              </svg>
            </PlainButton>
            <PlainButton aria-label="关闭窗口"><Close size={10} color="#999" /></PlainButton>
          </WindowButtons>
        </TitleBar>

        <TabRow>
          <MainTab>【未来・BIM量筋合一】</MainTab>
          <MenuBar>
            {menu.map((item, i) =>
              item ? (
                <MenuButton key={i} $end={item.text ? 2 : 0} aria-label={item.text || item.icon}>
                  <Icon name={item.icon} />
                  {item.text}
                </MenuButton>
              ) : (
                <Divider key={i} />
              )
            )}
          </MenuBar>
        </TabRow>
        <LogoSpot><Logo size={38} /></LogoSpot>

        <Ribbon>
          <Group $width={109}>
            <BigButton><BigHouse />工程设置<Caret $margin="3px 0 0" /></BigButton>
            <SmallGrid $left={6}>
              <Small icon="layers">复制</Small>
              <Small icon="people">拼接</Small>
              <Small icon="property">属性</Small>
            </SmallGrid>
          </Group>
          <Group $width={110}>
            <BigButton><BigSigma />汇总计算<Caret $margin="3px 0 0" /></BigButton>
            <SmallGrid $left={6}>
              <Small icon="report">报表</Small>
              <Small icon="teapot">查量</Small>
              <Small icon="glasses">查筋</Small>
            </SmallGrid>
          </Group>
          <Group $width={269} $pad={1}>
            <BigButton><BigArrow />选择<Caret $margin="3px 0 0" /></BigButton>
            <Strips>
              <Strip>
                <StripButton $on><Icon name="point" />单点布置</StripButton>
                <StripButton><Icon name="pointRotate" />旋转布置</StripButton>
                <StripButton><Icon name="pointCoord" />坐标布置</StripButton>
              </Strip>
              <Strip><StripButton><Icon name="corner" />转角</StripButton></Strip>
            </Strips>
          </Group>
          <Group $width={83} $pad={6}>
            <SmallGrid $gap={6}>
              <Small icon="slope">斜</Small>
              <Small icon="height">高</Small>
              <Small icon="rebar">筋</Small>
              <Small icon="up">升</Small>
              <Small icon="greenMan">私</Small>
              <Small icon="align">齐</Small>
            </SmallGrid>
          </Group>
          <Group $width={69} $pad={6}>
            <SmallGrid>
              <Small icon={<Ball n={1} fill="#0a0ae0" />}>校基点</Small>
              <Small icon={<Ball n={2} fill="#0a980a" />}>工作区</Small>
              <Small icon="table">识表格</Small>
            </SmallGrid>
            <Launcher aria-label="更多识别" />
          </Group>
          <Group $width={101} $pad={3}>
            <Strips>
              <Strip>
                <StripButton $on aria-label="平面"><Icon name="flatBox" /></StripButton>
                <StripButton aria-label="线框"><Icon name="wireCube" /></StripButton>
                <StripButton aria-label="楼房"><Icon name="building" /></StripButton>
                <StripButton aria-label="实体"><Icon name="cube" /></StripButton>
              </Strip>
              <Strip>
                <StripButton aria-label="平移"><Icon name="pan" /></StripButton>
                <StripButton aria-label="缩放"><Icon name="zoom" /></StripButton>
                <StripButton aria-label="旋转视图"><Icon name="planet" /></StripButton>
                <StripButton aria-label="全图"><Icon name="zoomFit" /></StripButton>
              </Strip>
            </Strips>
            <Launcher aria-label="更多视图" />
          </Group>
          <Group $width={125} $pad={3}>
            <Strips>
              <Strip>
                <StripButton><Icon name="umbrella" />检查</StripButton>
                <StripButton><Icon name="repair" />修复</StripButton>
                <StripButton aria-label="清单"><Icon name="checklist" /></StripButton>
              </Strip>
              <Strip>
                <StripButton aria-label="删除"><Icon name="cross" /></StripButton>
                <StripButton aria-label="复制对象"><Icon name="circles" /></StripButton>
                <StripButton aria-label="镜像"><Icon name="mirror" /></StripButton>
                <StripButton aria-label="移动"><Icon name="move" /></StripButton>
                <StripButton aria-label="旋转"><Icon name="rotate" /></StripButton>
              </Strip>
            </Strips>
            <Launcher aria-label="更多编辑" />
          </Group>
          <Group $width={175}>
            <SmallGrid>
              <Small icon="measure">测量</Small>
              <Small icon="mark">标注</Small>
              <Small icon="aux">辅助</Small>
              <Small icon="chat">查询</Small>
              <Small icon="colorCube">颜色</Small>
              <Small icon="tiles">显示</Small>
              <Small icon="cadPaper">CAD图纸</Small>
              <Small icon="layers">CAD图层</Small>
              <Small icon="cadEdit">CAD编辑</Small>
            </SmallGrid>
          </Group>
        </Ribbon>

        <Work>
          <Dock $width={168}>
            <DockTitle>构件导航<PlainButton aria-label="关闭导航"><Close /></PlainButton></DockTitle>
            <DockTabs>
              <DockTab $on>建模</DockTab>
              <DockTab>图纸</DockTab>
              <DockTab>表格算量</DockTab>
            </DockTabs>
            <FloorRow>
              楼层:
              <Combo $width={129}>
                <Icon name="flatSlab" />
                <Select><option>基础层(空)[1,3</option></Select>
                <Chevron />
              </Combo>
            </FloorRow>
            <Tree>
              {navTree.map(([icon, text], i) => (
                <TreeRow key={text} onClick={() => setSelected(text)}>
                  <Branch $end={i === 0 ? "first" : i === navTree.length - 1 ? "last" : ""}>
                    {i > 0 && <Toggle aria-label={text} />}
                  </Branch>
                  <Icon name={icon} />
                  <TreeText $on={selected === text}>{text}</TreeText>
                </TreeRow>
              ))}
            </Tree>
            <DockFooter>
              <FooterButton $small aria-label="窗口"><Icon name="windows" /></FooterButton>
              <FooterButton $grow={3}><Icon name="exchange" />切换界面</FooterButton>
              <FooterButton $grow={2}><Icon name="flower" />显示</FooterButton>
            </DockFooter>
          </Dock>
          <Sash $mark />

          <Dock $width={236}>
            <DockTitle $pad={3}>构件属性列表<PlainButton aria-label="关闭列表"><Close /></PlainButton></DockTitle>
            <PanelBar>
              <Icon name="addSheet" />
              <Caret />
              <Icon name="copySheet" />
              <Icon name="delSheet" />
              <FilterInput aria-label="过滤" defaultValue="过滤..." />
              <Icon name="property" />
            </PanelBar>
            <Tree $boxed $flex="0 0 318px" $pad="1px 0 0 8px">
              {partTree.flatMap(([icon, text, leaf], i) => {
                const last = i === partTree.length - 1;
                return [
                  <TreeRow key={text}>
                    <Branch $end={last ? "last" : i === 0 ? "top" : ""}>
                      <Toggle $open aria-label={text} />
                    </Branch>
                    <Icon name={icon} />
                    <TreeText>{text}</TreeText>
                  </TreeRow>,
                  <TreeRow key={text + leaf}>
                    <Guide $line={!last} />
                    <Branch $end="leaf" />
                    <Icon name={leaf === "ZLT1" ? "pointer" : icon} />
                    <TreeText $code $on={leaf === "ZLT1"}>{leaf}</TreeText>
                  </TreeRow>,
                ];
              })}
            </Tree>
            <Splitter />
            <DockTitle $pad={3}>构件属性</DockTitle>
            <GridBox $flex="0 0 254px">
              <PropertyGrid data={dockRows} height={18} widths={[79, 155]} heads={["名称", "属性值"]} />
            </GridBox>
            <MiniDrawingBox><MiniDrawing /></MiniDrawingBox>
          </Dock>
          <Sash />

          <Dialog>
            <DialogTitle>
              <Logo size={16} />
              <DialogName>属性设置: -&gt;当前楼层:基础层</DialogName>
              <WindowButtons $height={28} $gap={34} $right={18}>
                <PlainButton aria-label="最小化">
                  <svg width="11" height="11"><path d="M0 5.500h11" stroke="#bbb" /></svg>
                </PlainButton>
                <PlainButton aria-label="最大化">
                  <svg width="11" height="11"><path d="M.5.5h10v10H.5z" fill="none" stroke="#000" /></svg>
                </PlainButton>
                <PlainButton aria-label="关闭对话框"><Close size={11} color="#000" /></PlainButton>
              </WindowButtons>
            </DialogTitle>

            <DialogBar>
              <Tool icon="layers">楼层</Tool>
              <Combo $width={71}>
                <Icon name="stair" />
                <Select aria-label="构件类别"><option>楼梯</option></Select>
                <Chevron />
              </Combo>
              <Divider $height={20} $color="#999" />
              <Tool icon="addSheet">添加</Tool>
              <Caret />
              <Divider $height={20} $color="#999" />
              <Tool icon="copySheet">复制</Tool>
              <Tool icon="rename">重命名</Tool>
              <Divider $height={20} $color="#999" />
              <Tool icon="delSheet">删除</Tool>
              <Divider $height={20} $color="#999" />
              <Tool icon="greenLayers">属性楼层复制</Tool>
              <Divider $height={20} $color="#999" />
              <Tool icon="link">批量自动套</Tool>
              <Divider $height={20} $color="#999" />
              <Tool icon="sheetFlash">属性表格录入</Tool>
              <Divider $height={20} $color="#999" />
              <Tool icon="ok">关闭</Tool>
              <Divider $height={20} $color="#999" />
            </DialogBar>

            <DialogBody>
              <TreeBox>
                <Tree $pad="1px 0 0 9px">
                  <TreeRow>
                    <Branch $end="root"><Toggle $open aria-label="楼梯" /></Branch>
                    <Icon name="stair" />
                    <TreeText>楼梯</TreeText>
                  </TreeRow>
                  {partTree.flatMap(([icon, text, leaf], i) => {
                    const open = leaf === "ZLT1";
                    const row = (
                      <TreeRow key={text}>
                        <Guide />
                        <Branch $end={i === partTree.length - 1 ? "last" : ""}>
                          <Toggle $open={open} aria-label={text} />
                        </Branch>
                        <Icon name={icon} />
                        <TreeText>{text}</TreeText>
                      </TreeRow>
                    );
                    if (!open) return [row];
                    return [
                      row,
                      <TreeRow key={leaf}>
                        <Guide />
                        <Guide $line />
                        <Branch $end="leaf" />
                        <Icon name="pointer" />
                        <TreeText $code $on>{leaf}</TreeText>
                      </TreeRow>,
                    ];
                  })}
                </Tree>
              </TreeBox>
              <Settings>
                <PageTabs>
                  <PageTab $on>构件设置</PageTab>
                  <PageTab>套定额</PageTab>
                </PageTabs>
                <GridBox>
                  <PropertyGrid
                    checks
                    data={rows}
                    height={17}
                    widths={[104, 100, 35]}
                    heads={["名称", "属性", "附加"]}
                  />
                </GridBox>
              </Settings>
              <CadBox>
                <StairDrawing />
                <TypePicker>
                  <Select aria-label="配筋类型"><option>配筋类型一</option></Select>
                  <DropMark />
                </TypePicker>
                <ViewBox>
                  <ViewButton>二维</ViewButton>
                  <ViewButton>三维</ViewButton>
                  <ViewLabel>图形操作</ViewLabel>
                </ViewBox>
              </CadBox>
            </DialogBody>

            <Notes>
              <NotesTitle>操作说明</NotesTitle>
              <Note $indent={12}>操作说明: 左栏为数据输入网格，右侧为输入数据或图标说明。</Note>
              <Note>工程量分类: 分类统计工程量数据标记,在后面工程量分析时将可以按标记分开工程量。</Note>
            </Notes>
          </Dialog>

          <FloatLogo href="#" aria-label="助手">
            <svg width="40" height="48" viewBox="0 0 40 48" aria-hidden="true">
              <path d="M17 8h23l-6 9H7z" fill="#a8dc7c" />
              <path d="M7 17h27l6 6H12z" fill="#bdea94" />
              <path d="M14 25h26v7H20z" fill="#7ed8ff" />
              <path d="M20 32h20l-6 8H11z" fill="#0cb2ff" />
            </svg>
          </FloatLogo>
        </Work>

        <Status>
          <StatusCell>单点布置: ①左键布置构件(+Shift键基点硬定位，+Ctrl键构件定位)</StatusCell>
          <StatusCell $width={206} $pad={4}>层高:3m; 底标高:-3m; 基础层</StatusCell>
          <StatusCell $width={126} $pad={4}>(x,y,z)坐标或旋转角度</StatusCell>
          <StatusButton $color="#000">轴号</StatusButton>
          <StatusButton $color="#a3abb8">正交</StatusButton>
          <StatusButton $color="#000">动态</StatusButton>
          <StatusButton $color="#000">图纸</StatusButton>
          <StatusButton>捕捉</StatusButton>
          <StatusButton $color="#a3abb8">分层</StatusButton>
          <StatusButton>提示</StatusButton>
          <StatusButton>编号</StatusButton>
          <StatusIcon aria-label="计算器"><Icon name="calc" /></StatusIcon>
          <StatusIcon aria-label="打印"><Icon name="printer" /></StatusIcon>
          <StatusIcon aria-label="范围"><Icon name="frame" /></StatusIcon>
        </Status>
      </Page>
    </>
  );
};

export default App;
